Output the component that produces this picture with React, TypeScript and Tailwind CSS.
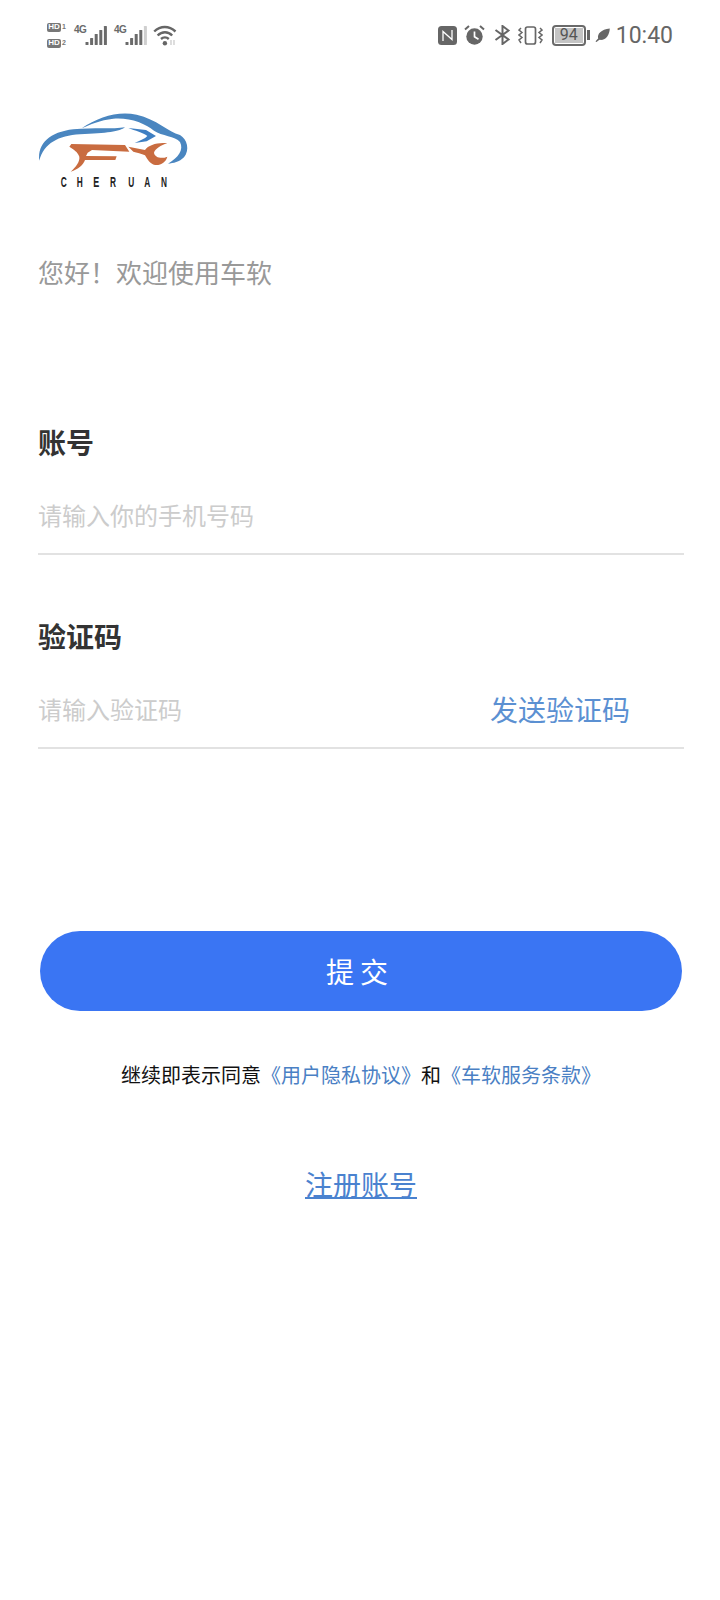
import React from "react";

const cjk = '"Noto Sans CJK SC", "Noto Sans", sans-serif';

function Cell({ level = 4 }: { level?: number }) {
  const hs = [3, 7, 11, 15, 19];
  return (
    <svg width="22" height="20" viewBox="0 0 22 20">
      {hs.map((h, i) => (
        <rect key={i} x={0.5 + i * 4.6} y={20 - h} width="3" height={h} rx="0.6" fill={i <= level ? "#6a6a6a" : "#cfcfcf"} />
      ))}
    </svg>
  );
}

function HdRow({ n }: { n: string }) {
  return (
    <div className="flex items-center gap-[1px]">
      <span className="w-[14px] h-[9px] flex items-center justify-center bg-[#777] text-white rounded-[2px] text-[8px] leading-none font-bold" style={{ fontFamily: '"Liberation Sans", sans-serif' }}>HD</span>
      <span className="text-[7px] leading-[8px] text-[#777] font-bold" style={{ fontFamily: '"Liberation Sans", sans-serif' }}>{n}</span>
    </div>
  );
}

function Net({ level, cls }: { level?: number; cls: string }) {
  return (
    <div className={"flex items-start h-[20px] " + cls}>
      <span className="w-[11px] text-[10px] leading-[9px] text-[#6a6a6a] font-bold tracking-[-0.5px]" style={{ fontFamily: '"Liberation Sans", sans-serif' }}>4G</span>
      <Cell level={level} />
    </div>
  );
}

function StatusBar() {
  return (
    <div className="flex items-center justify-between h-[70px] pl-[47px] pr-[47px] text-[#666]">
      <div className="flex items-center">
        <div className="flex flex-col gap-[7px]">
          <HdRow n="1" />
          <HdRow n="2" />
        </div>
        <Net cls="ml-[8px]" />
        <Net cls="ml-[7px]" level={3} />
        <svg className="ml-[6px]" width="25" height="21" viewBox="0 0 25 21" fill="none">
          <path d="M1.2 6.5C7.5 0.5 16 0.5 22.5 6.5" stroke="#666" strokeWidth="2.4" />
          <path d="M4.6 10.5C9 6.2 15 6.2 19.2 10.5" stroke="#666" strokeWidth="2.4" />
          <path d="M8 14C10.2 12 13.6 12 15.8 14" stroke="#666" strokeWidth="2.4" />
          <circle cx="11.9" cy="18.3" r="2.2" fill="#666" />
          <path d="M18 15v5M21 15v5" stroke="#ccc" strokeWidth="1.3" />
        </svg>
      </div>
      <div className="flex items-center">
        <svg width="19" height="19" viewBox="0 0 19 19">
          <rect width="19" height="19" rx="3.5" fill="#666" />
          <path d="M5 15V5.5L14 13.5V4" stroke="#fff" strokeWidth="1.3" fill="none" />
        </svg>
        <svg className="ml-[7px]" width="21" height="20" viewBox="0 0 21 20">
          <circle cx="10.5" cy="11.5" r="8.2" fill="#666" />
          <path d="M10.5 6.5v5.2l4 2.5" stroke="#fff" strokeWidth="1.7" fill="none" />
          <path d="M1 4.5L5 1M20 4.5L16 1" stroke="#666" strokeWidth="2" />
        </svg>
        <svg className="ml-[9px]" width="17" height="20" viewBox="0 0 17 20" fill="none">
          <path d="M1.5 5l13 9.5L8.5 19V1l6 4.5L1.5 15" stroke="#666" strokeWidth="2" />
        </svg>
        <svg className="ml-[7px]" width="25" height="19" viewBox="0 0 25 19" fill="none">
          <rect x="7.5" y="1" width="10" height="17" rx="2" stroke="#666" strokeWidth="1.7" />
          <path d="M3 2L1 4l3 2.5L1 9l3 2.5L1 14l2 3M22 2l2 2-3 2.5L24 9l-3 2.5L24 14l-2 3" stroke="#666" strokeWidth="1.5" />
        </svg>
        <div className="ml-[9px] w-[34px] h-[21px] border-2 border-[#6a6a6a] rounded-[4px] p-[1px] flex">
          <div className="flex-1 bg-[#c4c4c4] flex items-center justify-center text-[16px] leading-none text-[#555]" style={{ fontFamily: "Roboto, sans-serif" }}>94</div>
        </div>
        <div className="ml-[1px] w-[3px] h-[10px] bg-[#666]" />
        <svg className="ml-[5px]" width="15" height="14" viewBox="0 0 15 14">
          <path d="M0.5 13.5C1.5 12 2.5 11 3.2 10.4C2 6 6 1.5 14.8 0.5C14.5 7 11 12.6 4.6 11.8C3.6 12.4 2.4 13.2 1.6 14Z" fill="#666" />
        </svg>
        <span className="ml-[6px] text-[23px] leading-[28px] mt-[1px] text-[#666]" style={{ fontFamily: "Roboto, sans-serif" }}>10:40</span>
      </div>
    </div>
  );
}

function Logo() {
  const letters: [string, number][] = [["C", 92], ["H", 140], ["E", 190], ["R", 240], ["U", 295], ["A", 343], ["N", 393]];
  return (
    <svg className="-ml-[8px]" width="170" height="100" viewBox="0 0 510 300" fill="none">
      <path d="M28 182C22 130 60 96 130 88C190 82 250 88 285 82C270 94 230 100 150 103C85 107 42 130 28 182Z" fill="#4a86c0" />
      <path d="M155 85C205 50 265 32 320 44C380 58 415 95 450 105C472 118 480 150 462 172C448 186 430 190 414 191C445 172 462 150 450 126C436 108 395 108 372 92C345 70 300 52 250 56C210 60 180 74 155 85Z" fill="#4a86c0" />
      <path d="M295 84L348 90L378 108L350 124L314 129C330 122 345 116 352 108C340 98 315 92 295 84Z" fill="#3f7fc2" />
      <path d="M124 132L285 135L298 155L186 150L173 158L168 168L260 169L256 180L165 180C160 195 145 208 122 215C138 200 150 185 148 170C143 155 130 148 118 140Z" fill="#c96c40" />
      <path d="M295 140L345 150C355 135 385 126 412 130C392 136 376 146 372 158C374 172 394 178 412 170C408 186 392 197 375 195C360 192 352 178 345 166C335 160 320 158 310 155Z" fill="#c96c40" />
      {letters.map(([c, x]) => (
        <text key={c} x={x} y="262" fontSize="46" fontWeight="700" fill="#222" textLength="18" lengthAdjust="spacingAndGlyphs" fontFamily='"Liberation Sans", sans-serif'>{c}</text>
      ))}
    </svg>
  );
}

export default function App() {
  return (
    <div className="w-[720px] h-[1600px] bg-white" style={{ fontFamily: cjk }}>
      <StatusBar />
      <div className="pl-[38px] pr-[36px]">
        <div className="mt-[30px] h-[100px]"><Logo /></div>
        <div className="mt-[53px] text-[26px] leading-[38px] text-[#999]">您好！欢迎使用车软</div>
        <div className="mt-[131px] text-[28px] leading-[40px] font-bold text-[#333]">账号</div>
        <div className="mt-[35px] pb-[20px] border-b-2 border-[#e2e2e2] text-[24px] leading-[36px] text-[#ccc]">请输入你的手机号码</div>
        <div className="mt-[61px] text-[28px] leading-[40px] font-bold text-[#333]">验证码</div>
        <div className="mt-[35px] pb-[20px] border-b-2 border-[#e2e2e2] flex items-center justify-between text-[24px] leading-[36px] text-[#ccc]">
          <span>请输入验证码</span>
          <span className="text-[28px] text-[#5b90d2] mr-[54px]">发送验证码</span>
        </div>
        <button className="block mt-[182px] ml-[2px] w-[642px] h-[80px] rounded-full bg-[#3a75f3] text-white text-[28px] tracking-[6px] pr-[2px]">提交</button>
        <div className="mt-[48px] text-center text-[20px] leading-[32px] text-[#111]">
          继续即表示同意<span className="text-[#4a80c4]">《用户隐私协议》</span>和<span className="text-[#4a80c4]">《车软服务条款》</span>
        </div>
        <div className="mt-[72px] text-center text-[28px] leading-[42px] text-[#4a82cf] underline decoration-2">注册账号</div>
      </div>
    </div>
  );
}
